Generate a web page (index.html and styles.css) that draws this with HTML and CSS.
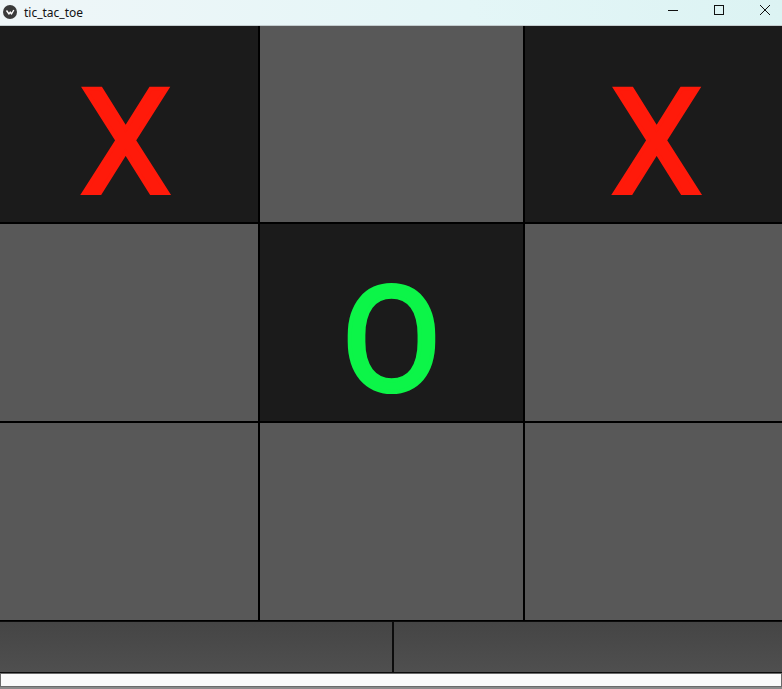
FILE: index.html
```html
<!DOCTYPE html>
<html>
<head>
<meta charset="utf-8">
<link rel="stylesheet" href="styles.css">
</head>
<body>
<div class="window">
  <div class="titlebar">
    <div class="app">
      <svg class="app-icon" width="14" height="14" viewBox="0 0 14 14"><circle cx="7" cy="7" r="7" fill="#3a3a3a"/><path d="M3.5 5.5 L6 9 L7.2 7 L8.5 9 L10.8 5" stroke="#fff" stroke-width="1.4" fill="none" stroke-linejoin="round"/></svg>
      <span class="title">tic_tac_toe</span>
    </div>
    <div class="controls">
      <svg width="46" height="25" viewBox="0 0 46 25"><path d="M18 10.5 H28" stroke="#111" stroke-width="1"/></svg>
      <svg width="46" height="25" viewBox="0 0 46 25"><rect x="18.5" y="5.5" width="9" height="9" stroke="#111" stroke-width="1" fill="none"/></svg>
      <svg width="46" height="25" viewBox="0 0 46 25"><path d="M18 5 L28 15 M28 5 L18 15" stroke="#111" stroke-width="1"/></svg>
    </div>
  </div>
  <div class="board">
    <div class="cell filled x left">X</div>
    <div class="cell"></div>
    <div class="cell filled x right">X</div>
    <div class="cell"></div>
    <div class="cell filled o">O</div>
    <div class="cell"></div>
    <div class="cell"></div>
    <div class="cell"></div>
    <div class="cell"></div>
  </div>
  <div class="actions">
    <div class="btn"></div>
    <div class="btn"></div>
  </div>
  <div class="input"></div>
</div>
</body>
</html>
```
FILE: styles.css
```css
html, body {
  margin: 0;
  padding: 0;
  background: #8a8a8a;
  overflow: hidden;
}
.window {
  width: 782px;
  height: 689px;
  display: flex;
  flex-direction: column;
}
.titlebar {
  height: 25px;
  border-bottom: 1px solid #c4cdcf;
  background: linear-gradient(to right, #eff6f8, #e4f6f7 60%, #dcf3f3);
  display: flex;
  justify-content: space-between;
  align-items: center;
  flex-shrink: 0;
}
.app {
  display: flex;
  align-items: center;
  gap: 7px;
  padding-left: 3px;
  padding-bottom: 1px;
}
.app-icon { display: block; }
.title {
  font-family: "Noto Sans", "Open Sans", sans-serif;
  font-size: 12px;
  color: #111;
}
.controls {
  display: flex;
  align-self: flex-start;
  margin-right: -6px;
}
.controls svg { display: block; }
.board {
  display: grid;
  grid-template-columns: 258px 263px 257px;
  grid-template-rows: 196px 197px 197px;
  gap: 2px;
  background: #000;
  padding-bottom: 1px;
  flex-shrink: 0;
}
.cell {
  background: #585858;
  display: flex;
  align-items: center;
  justify-content: center;
  font-family: Roboto, "Liberation Sans", sans-serif;
  font-size: 146px;
  line-height: normal;
  padding-top: 38px;
  box-sizing: border-box;
}
.cell.filled { background: #1b1b1b; }
.cell.x { color: #ff1a0a; -webkit-text-stroke: 4px #ff1a0a; }
.cell.x.left { padding-right: 7px; }
.cell.x.right { padding-left: 6px; }
.cell.o { color: #0cf548; -webkit-text-stroke: 4px #0cf548; }
.actions {
  display: grid;
  grid-template-columns: 392px 388px;
  gap: 2px;
  height: 50px;
  background: #0c0c0c;
  padding-top: 1px;
  padding-bottom: 1px;
  flex-shrink: 0;
}
.btn {
  background: linear-gradient(to bottom, #454545, #4f4f4f);
}
.input {
  height: 12px;
  background: #fafafa;
  border: 1px solid #6a6a6a;
  flex-shrink: 0;
}
```
